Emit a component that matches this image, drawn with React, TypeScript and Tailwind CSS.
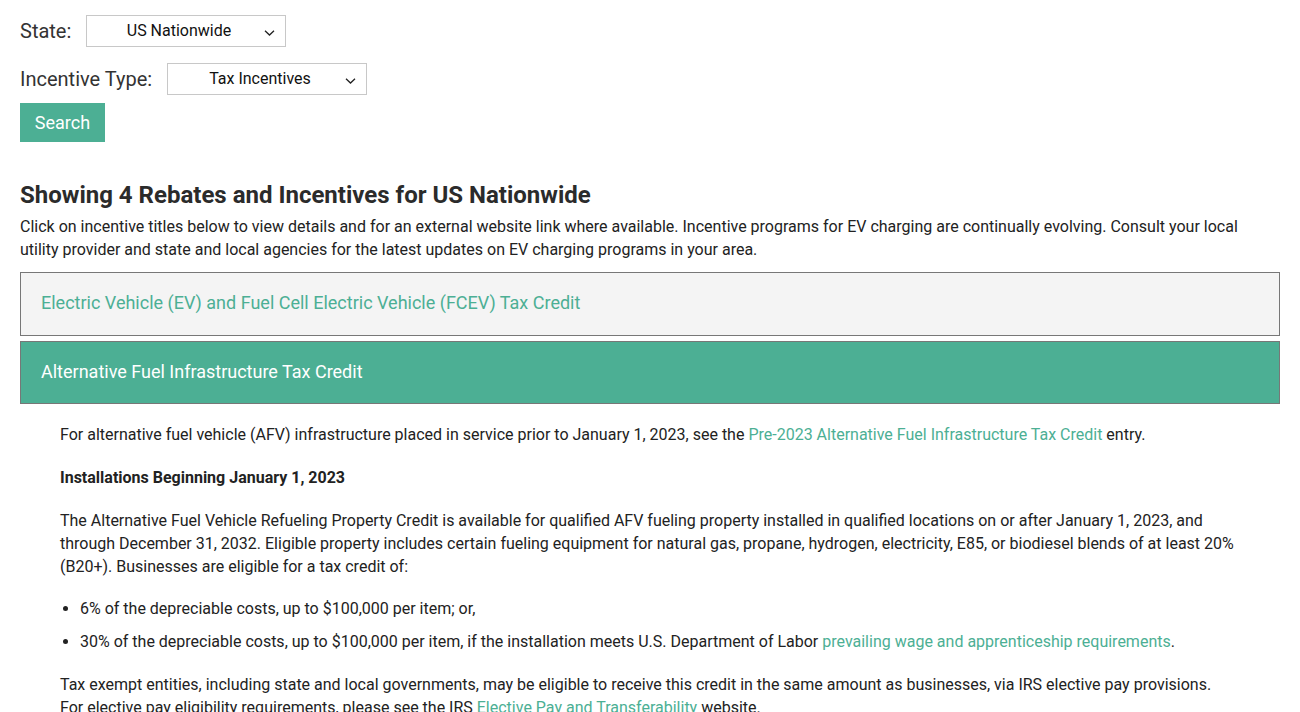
const green = "text-[#4caf94]";

function SelectBox({ value }: { value: string }) {
  return (
    <div className="relative flex h-[32px] w-[200px] items-center justify-center border border-[#c8c8c8] bg-white text-[16px] text-[#111]">
      <span className="-ml-[14px]">{value}</span>
      <svg className="absolute right-[10px] top-[14px] h-[6px] w-[11px]" viewBox="0 0 11 6" fill="none">
        <path d="M1 0.8 5.5 5 10 0.8" stroke="#222" strokeWidth="1.3" />
      </svg>
    </div>
  );
}

export default function App() {
  return (
    <div className="min-h-screen bg-white px-[20px] pt-[15px] font-['Roboto',sans-serif] text-[#2b2b2b]">
      {/* Filters */}
      <div className="flex items-center">
        <label className="w-[66px] text-[20px] text-[#333]">State:</label>
        <SelectBox value="US Nationwide" />
      </div>
      <div className="mt-[16px] flex items-center">
        <label className="w-[147px] text-[20px] text-[#333]">Incentive Type:</label>
        <SelectBox value="Tax Incentives" />
      </div>
      <button className="mt-[8px] h-[39px] w-[85px] bg-[#4caf94] text-[18px] leading-[37px] text-white">Search</button>

      {/* Results */}
      <h2 className="mt-[38px] text-[24px] font-bold leading-[30px] text-[#2b2b2b]">
        Showing 4 Rebates and Incentives for US Nationwide
      </h2>
      <p className="mt-[5px] pr-[40px] text-[16px] leading-[23px] text-[#222]">
        Click on incentive titles below to view details and for an external website link where available. Incentive
        programs for EV charging are continually evolving. Consult your local utility provider and state and local
        agencies for the latest updates on EV charging programs in your area.
      </p>

      <div className="mt-[11px] flex flex-col gap-[5px]">
        <div className="flex h-[64px] items-center border border-[#777] bg-[#f4f4f4] px-[20px] pb-[4px]">
          <span className={`text-[18px] ${green}`}>Electric Vehicle (EV) and Fuel Cell Electric Vehicle (FCEV) Tax Credit</span>
        </div>
        <div className="flex h-[63px] items-center border border-[#777] bg-[#4caf94] px-[20px] pb-[2px]">
          <span className="text-[18px] text-white">Alternative Fuel Infrastructure Tax Credit</span>
        </div>
      </div>

      {/* Expanded content */}
      <div className="pl-[40px] pr-[30px] pt-[19px] text-[16px] leading-[23px] text-[#222]">
        <p>
          For alternative fuel vehicle (AFV) infrastructure placed in service prior to January 1, 2023, see the{" "}
          <a className={green}>Pre-2023 Alternative Fuel Infrastructure Tax Credit</a> entry.
        </p>
        <p className="mt-[20px] font-bold">Installations Beginning January 1, 2023</p>
        <p className="mt-[20px]">
          The Alternative Fuel Vehicle Refueling Property Credit is available for qualified AFV fueling property
          installed in qualified locations on or after January 1, 2023, and
          <br />
          through December 31, 2032. Eligible property includes certain fueling equipment for natural gas, propane,
          hydrogen, electricity, E85, or biodiesel blends of at least 20% (B20+). Businesses are eligible for a tax
          credit of:
        </p>
        <ul className="mt-[19px] list-disc pl-[20px]">
          <li>6% of the depreciable costs, up to $100,000 per item; or,</li>
          <li className="mt-[10px]">
            30% of the depreciable costs, up to $100,000 per item, if the installation meets U.S. Department of Labor{" "}
            <a className={green}>prevailing wage and apprenticeship requirements</a>.
          </li>
        </ul>
        <p className="mt-[20px]">
          Tax exempt entities, including state and local governments, may be eligible to receive this credit in the same
          amount as businesses, via IRS elective pay provisions.
          <br />
          For elective pay eligibility requirements, please see the IRS{" "}
          <a className={green}>Elective Pay and Transferability</a> website.
        </p>
      </div>
    </div>
  );
}
